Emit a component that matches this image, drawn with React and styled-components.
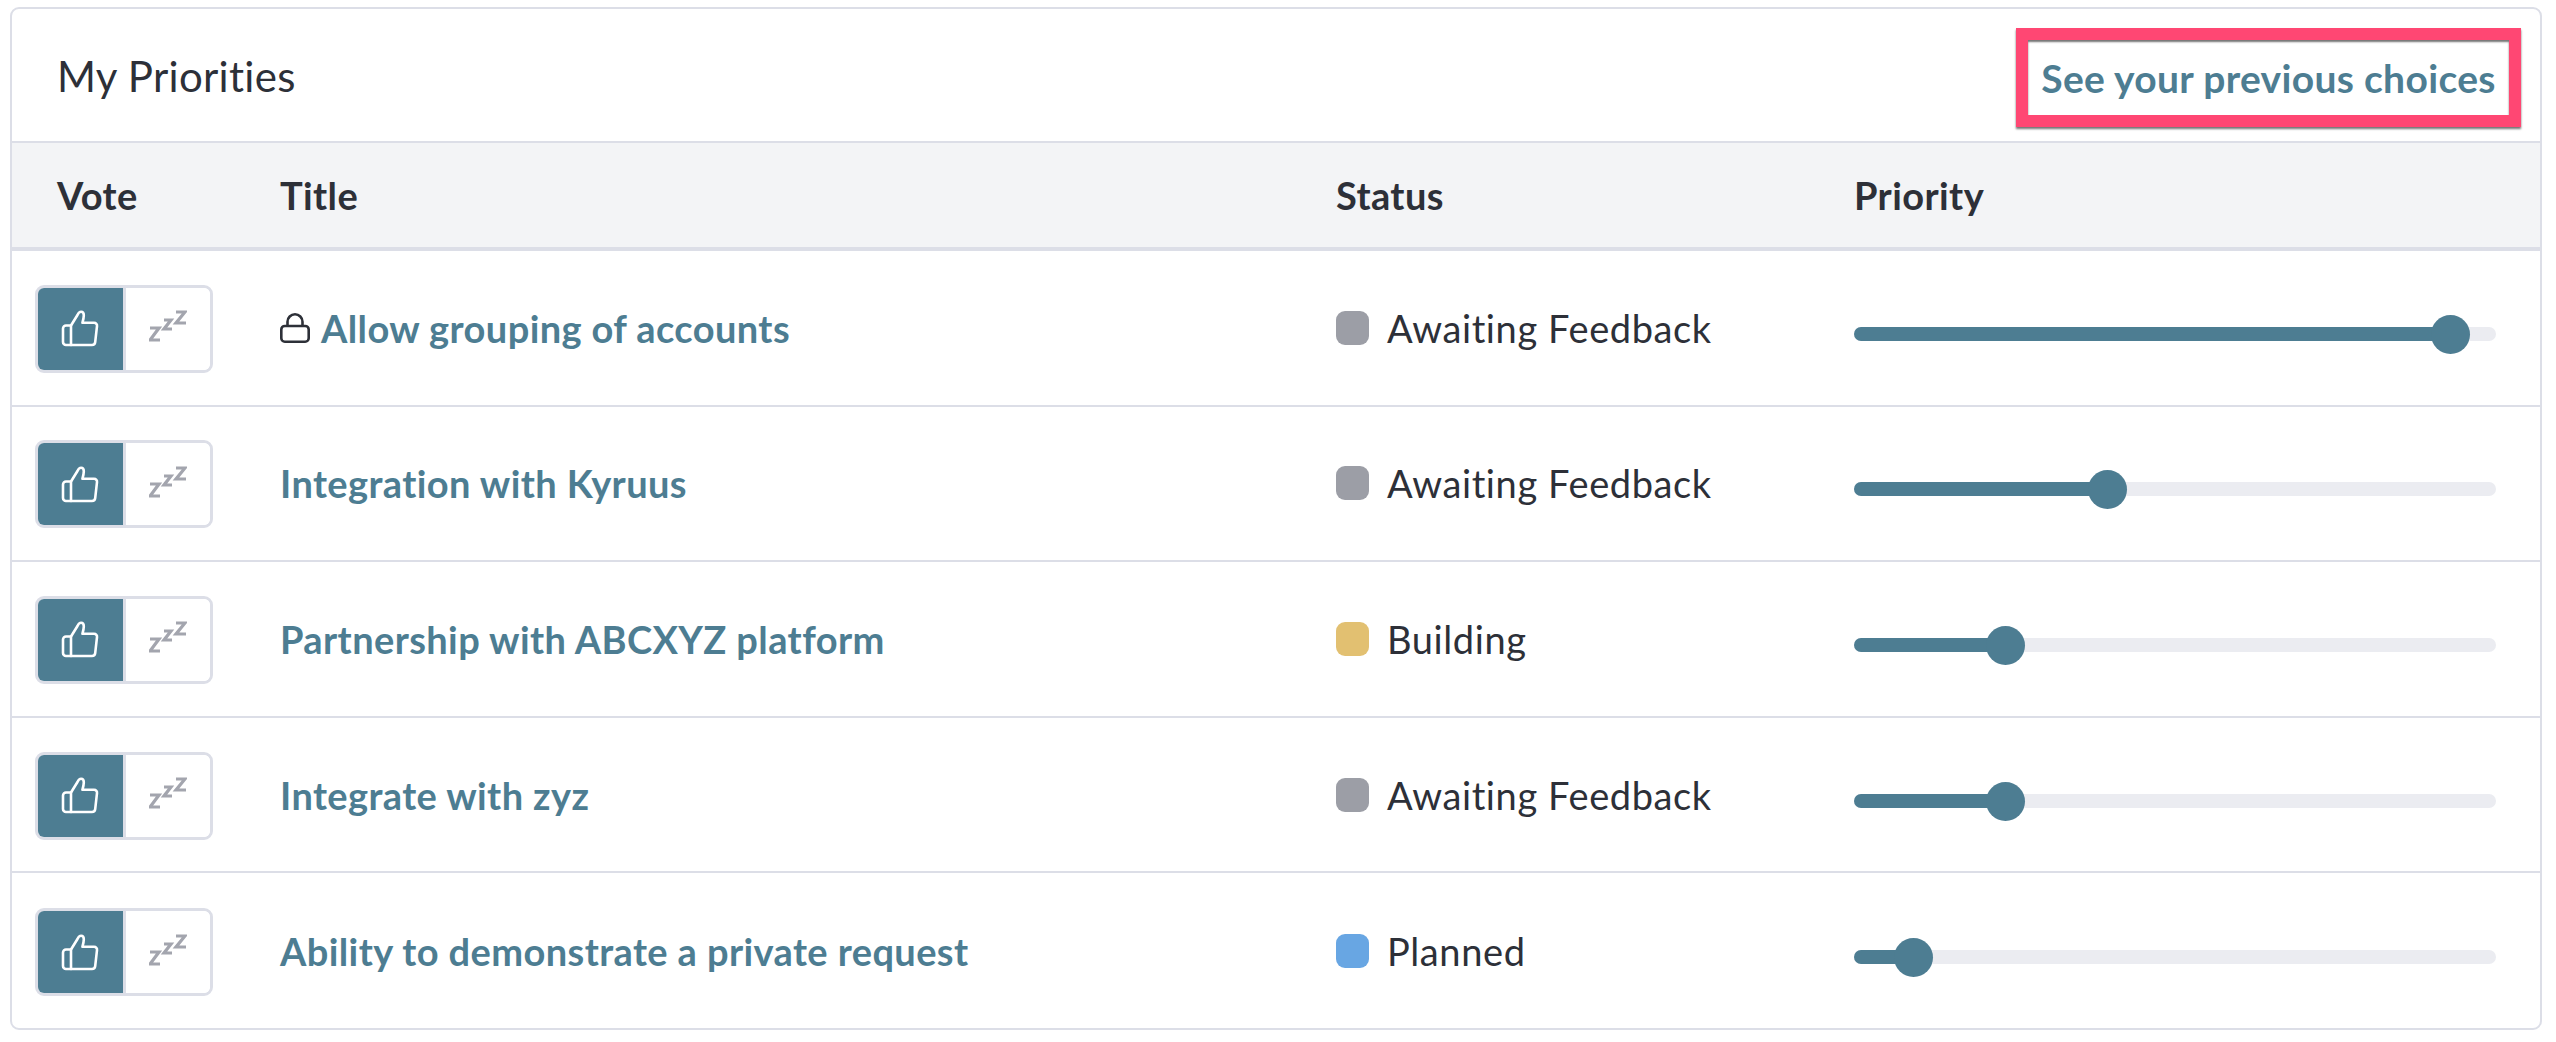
import React from 'react';
import styled, { createGlobalStyle } from 'styled-components';

const GlobalStyle = createGlobalStyle`
  html, body {
    margin: 0;
    padding: 0;
    background: #fff;
  }
  body {
    font-family: Lato, "Open Sans", "Liberation Sans", sans-serif;
    color: #2d3038;
  }
`;

const Card = styled.div`
  box-sizing: border-box;
  width: 2532px;
  height: 1023px;
  margin: 7px 0 0 10px;
  background: #fff;
  border: 2px solid #dcdee7;
  border-radius: 9px;
  overflow: hidden;
`;

const CardHeader = styled.div`
  box-sizing: border-box;
  height: 134px;
  padding: 19px 19px 0 45px;
  display: flex;
  align-items: flex-start;
  justify-content: space-between;
  border-bottom: 2px solid #dcdee7;
`;

const CardTitle = styled.h2`
  margin: 23px 0 0;
  font-size: 42px;
  font-weight: 400;
  letter-spacing: 0.3px;
  line-height: 50px;
`;

const PreviousLink = styled.a`
  box-sizing: border-box;
  width: 505px;
  height: 99px;
  display: flex;
  align-items: center;
  justify-content: center;
  border: 12px solid #ff4773;
  box-shadow: 0 2px 2px rgba(0, 0, 0, 0.55), inset 0 2px 2px rgba(0, 0, 0, 0.55);
  color: #4d7d92;
  font-size: 39px;
  font-weight: 700;
  letter-spacing: 0.32px;
  white-space: nowrap;
`;

const columns = '268px 1056px 518px 1fr';

const HeadRow = styled.div`
  box-sizing: border-box;
  height: 108px;
  display: grid;
  grid-template-columns: ${columns};
  align-items: center;
  background: #f3f4f6;
  border-bottom: 4px solid #dcdee7;
`;

const HeadCell = styled.div`
  font-size: 38px;
  font-weight: 700;
  letter-spacing: 0.4px;
  padding-left: ${({ $first }) => ($first ? '45px' : '0')};
`;

const Row = styled.div`
  box-sizing: border-box;
  height: 155.6px;
  display: grid;
  grid-template-columns: ${columns};
  align-items: center;
  border-bottom: 2.5px solid #dcdee7;

  &:last-child {
    border-bottom: 0;
  }
`;

const VoteCell = styled.div`
  padding: 2px 0 0 23px;
`;

const VoteGroup = styled.div`
  box-sizing: border-box;
  width: 178px;
  height: 88px;
  display: flex;
  border: 3px solid #dcdee7;
  border-radius: 9px;
  overflow: hidden;
`;

const VoteButton = styled.div`
  flex: 1;
  display: flex;
  align-items: center;
  justify-content: center;
  padding-bottom: ${({ $active }) => ($active ? '0' : '5px')};
  background: ${({ $active }) => ($active ? '#4d7d92' : '#fff')};
  border-right: ${({ $active }) => ($active ? '3px solid #dcdee7' : '0')};
`;

const TitleCell = styled.div`
  display: flex;
  align-items: center;
  gap: 11px;
`;

const TitleLink = styled.a`
  color: #4d7d92;
  font-size: 38px;
  font-weight: 700;
  letter-spacing: 0.4px;
  white-space: nowrap;
`;

const StatusCell = styled.div`
  display: flex;
  align-items: center;
  gap: 18px;
  font-size: 38px;
  letter-spacing: 0.6px;
  white-space: nowrap;
`;

const StatusDot = styled.span`
  width: 33px;
  height: 34px;
  border-radius: 9px;
  background: ${({ $color }) => $color};
`;

const Track = styled.div`
  width: 642px;
  height: 14px;
  margin-top: 12px;
  background: #ebecf1;
  border-radius: 7px;
`;

const Fill = styled.div`
  position: relative;
  width: ${({ $value }) => $value}%;
  height: 100%;
  background: #4d7d92;
  border-radius: 7px 0 0 7px;
`;

const Thumb = styled.span`
  position: absolute;
  right: -19px;
  top: -12px;
  width: 39px;
  height: 39px;
  border-radius: 50%;
  background: #4d7d92;
`;

const ThumbIcon = () => (
  <svg width="38" height="37" viewBox="0 0 38 37" fill="none" stroke="#fff" strokeWidth="2.6" strokeLinejoin="round" strokeLinecap="round" aria-label="Vote">
    <path d="M10 15.5H5a3 3 0 0 0-3 3V32a3 3 0 0 0 3 3h5" />
    <path d="M10 35V15.5l6.5-10.5c.8-1.8 2-3.2 3.6-3.2 1.7 0 2.7 1.5 2.7 3.4 0 2.2-.6 5-1.4 7.6H33c2 0 3.3 1.5 3 3.4l-1.8 16C34 34 32.8 35 31 35z" />
  </svg>
);

const SnoozeIcon = () => (
  <svg width="38" height="32" viewBox="0 0 38 32" fill="none" stroke="#a3a5ae" strokeWidth="3.2" strokeLinejoin="miter" aria-label="Snooze">
    <polyline points="1,18 10,18 1,30 11,30" />
    <polyline points="15,10 22,10 15,19 23,19" />
    <polyline points="27,2 36,2 27,13 37,13" />
  </svg>
);

const LockIcon = () => (
  <svg width="30" height="30" viewBox="0 0 30 30" fill="none" stroke="#2d3038" strokeWidth="2.6" aria-label="Private">
    <rect x="1.3" y="13" width="27.4" height="15.7" rx="3.5" />
    <path d="M7.5 13V8.8a7.5 7.5 0 0 1 15 0V13" />
  </svg>
);

const rows = [
  { title: 'Allow grouping of accounts', locked: true, status: 'Awaiting Feedback', color: '#9c9ea6', value: 93 },
  { title: 'Integration with Kyruus', status: 'Awaiting Feedback', color: '#9c9ea6', value: 39.6 },
  { title: 'Partnership with ABCXYZ platform', status: 'Building', color: '#e2c071', value: 23.6 },
  { title: 'Integrate with zyz', status: 'Awaiting Feedback', color: '#9c9ea6', value: 23.6 },
  { title: 'Ability to demonstrate a private request', status: 'Planned', color: '#68a6e3', value: 9.3 },
];

const App = () => (
  <>
    <GlobalStyle />
    <Card>
      <CardHeader>
        <CardTitle>My Priorities</CardTitle>
        <PreviousLink>See your previous choices</PreviousLink>
      </CardHeader>
      <HeadRow>
        <HeadCell $first>Vote</HeadCell>
        <HeadCell>Title</HeadCell>
        <HeadCell>Status</HeadCell>
        <HeadCell>Priority</HeadCell>
      </HeadRow>
      {rows.map((row) => (
        <Row key={row.title}>
          <VoteCell>
            <VoteGroup>
              <VoteButton $active><ThumbIcon /></VoteButton>
              <VoteButton><SnoozeIcon /></VoteButton>
            </VoteGroup>
          </VoteCell>
          <TitleCell>
            {row.locked && <LockIcon />}
            <TitleLink>{row.title}</TitleLink>
          </TitleCell>
          <StatusCell>
            <StatusDot $color={row.color} />
            {row.status}
          </StatusCell>
          <Track>
            <Fill $value={row.value}><Thumb /></Fill>
          </Track>
        </Row>
      ))}
    </Card>
  </>
);

export default App;
